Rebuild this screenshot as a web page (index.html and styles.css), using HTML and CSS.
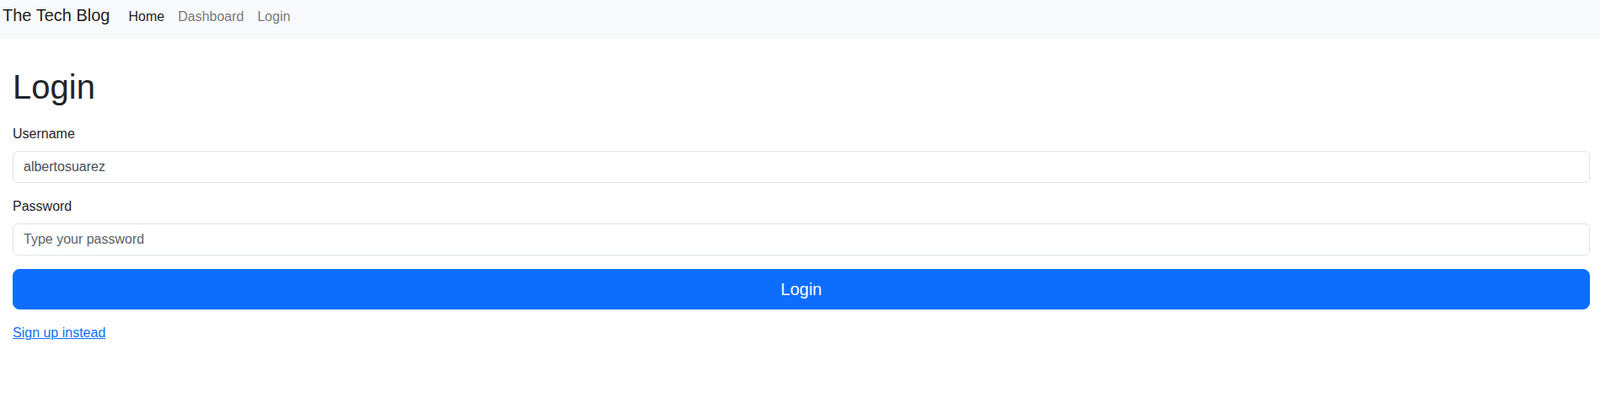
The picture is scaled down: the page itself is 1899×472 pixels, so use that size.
FILE: index.html
```html
<!DOCTYPE html>
<html lang="en">
<head>
<meta charset="utf-8">
<title>The Tech Blog</title>
<link rel="stylesheet" href="styles.css">
</head>
<body>
<nav class="navbar">
  <a class="brand" href="#">The Tech Blog</a>
  <ul class="nav">
    <li><a class="nav-link active" href="#">Home</a></li>
    <li><a class="nav-link" href="#">Dashboard</a></li>
    <li><a class="nav-link" href="#">Login</a></li>
  </ul>
</nav>
<main class="container">
  <h1 class="title">Login</h1>
  <form class="form">
    <div class="field">
      <label class="label" for="username">Username</label>
      <input class="control" id="username" type="text" value="albertosuarez">
    </div>
    <div class="field">
      <label class="label" for="password">Password</label>
      <input class="control" id="password" type="password" placeholder="Type your password">
    </div>
    <button class="btn" type="button">Login</button>
  </form>
  <a class="signup" href="#">Sign up instead</a>
</main>
</body>
</html>
```
FILE: styles.css
```css
* { box-sizing: border-box; }
html, body { margin: 0; padding: 0; }
body {
  font-family: "Liberation Sans", Arial, sans-serif;
  font-size: 16px;
  line-height: 1.5;
  color: #212529;
  background: #fff;
}
.navbar {
  display: flex;
  align-items: baseline;
  height: 46px;
  padding: 0 0 0 3px;
  background: #f8f9fa;
}
.brand {
  font-size: 20px;
  color: rgba(0,0,0,.9);
  text-decoration: none;
  margin-right: 14px;
  line-height: 1.5;
}
.nav {
  display: flex;
  align-items: baseline;
  list-style: none;
  margin: 0;
  padding: 0;
}
.nav-link {
  display: block;
  padding: 8px;
  color: rgba(0,0,0,.55);
  text-decoration: none;
}
.nav-link.active { color: rgba(0,0,0,.9); }
.container {
  padding: 0 12px 0 15px;
}
.title {
  font-size: 40px;
  font-weight: 500;
  line-height: 1.2;
  margin: 33px 0 20px;
}
.field { margin-bottom: 16px; }
.label {
  display: block;
  margin-bottom: 8px;
}
.control {
  display: block;
  width: 100%;
  height: 38px;
  padding: 6px 12px;
  font: inherit;
  color: #495057;
  border: 1px solid #dee2e6;
  border-radius: 6px;
  background: #fff;
}
.control::placeholder { color: #5c636a; opacity: 1; }
.btn {
  display: block;
  width: 100%;
  height: 48px;
  font: inherit;
  font-size: 20px;
  color: #fff;
  background: #0d6efd;
  border: 1px solid #0d6efd;
  border-radius: 8px;
  margin-bottom: 16px;
}
.signup {
  color: #0d6efd;
  text-decoration: underline;
}
```
